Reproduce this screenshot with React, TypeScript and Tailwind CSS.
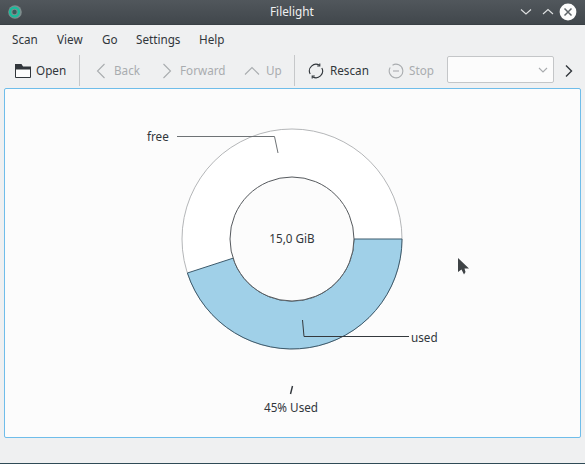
import React from "react";

const font = { fontFamily: '"Noto Sans", sans-serif' };

function Tool({ icon, label, off, w }: { icon: React.ReactNode; label: string; off?: boolean; w: string }) {
  return (
    <div className={`flex items-center h-[30px] shrink-0 ${w} ${off ? "text-[#a9acaf]" : "text-[#31363b]"}`}>
      {icon}
      <span className="text-[11.7px] leading-none">{label}</span>
    </div>
  );
}

const Sep = () => <div className="w-px h-[31px] bg-[#c6c8ca] shrink-0" />;

export default function App() {
  const cx = 287, cy = 150;
  return (
    <div className="w-[585px] h-[464px] bg-[#eff0f1] flex flex-col overflow-hidden" style={font}>
      {/* title bar */}
      <div className="h-[25px] shrink-0 flex items-center justify-between bg-gradient-to-b from-[#51575c] to-[#41474c] border-b border-[#3a4045] relative">
        <svg width="16" height="16" viewBox="0 0 16 16" className="ml-[7px]">
          <circle cx="8" cy="8" r="6.8" fill="#7f8c8d" />
          <circle cx="7.5" cy="8" r="4.4" fill="none" stroke="#1abc9c" strokeWidth="2.4" />
          <circle cx="7.5" cy="8" r="2.2" fill="#3d5a5c" />
        </svg>
        <span className="absolute left-[270px] top-[3px] text-[11.8px] leading-[17px] text-[#eff0f1]">Filelight</span>
        <div className="flex items-center mr-[8px]">
          <svg width="14" height="10" viewBox="0 0 14 10" className="mr-[8px]" fill="none" stroke="#dfe1e2" strokeWidth="1.1">
            <path d="M2 2.5 L7 7 L12 2.5" />
          </svg>
          <svg width="14" height="10" viewBox="0 0 14 10" className="mr-[4px]" fill="none" stroke="#dfe1e2" strokeWidth="1.1">
            <path d="M2 7 L7 2.5 L12 7" />
          </svg>
          <svg width="18" height="18" viewBox="0 0 18 18">
            <circle cx="9" cy="9" r="8.4" fill="#fcfcfc" />
            <path d="M5.5 5.5 L12.5 12.5 M12.5 5.5 L5.5 12.5" stroke="#5f6569" strokeWidth="1.5" />
          </svg>
        </div>
      </div>

      {/* menu */}
      <div className="h-[29px] shrink-0 flex items-center pl-[12px] text-[11.7px] text-[#31363b]">
        <span className="w-[45px]">Scan</span>
        <span className="w-[45px]">View</span>
        <span className="w-[34px]">Go</span>
        <span className="w-[63px]">Settings</span>
        <span>Help</span>
      </div>

      {/* toolbar */}
      <div className="h-[33px] shrink-0 flex items-center pl-[15px]">
        <Tool
          w="w-[64px]"
          label="Open"
          icon={
            <svg width="16" height="16" viewBox="0 0 16 16" className="mr-[5px]">
              <path d="M0.5 2.5 V14.5 H15.5 V4.5 H7.5 L6 2.5 Z" fill="#fcfcfc" stroke="#31363b" />
              <path d="M0 1 H6.5 L8 3.5 H16 V6.5 H0 Z" fill="#31363b" />
            </svg>
          }
        />
        <Sep />
        <div className="w-[15px] shrink-0" />
        <Tool
          off
          w="w-[66px]"
          label="Back"
          icon={
            <svg width="12" height="16" viewBox="0 0 12 16" className="mr-[7px]" fill="none" stroke="#a9acaf" strokeWidth="1.1">
              <path d="M9.5 1 L2.5 8 L9.5 15" />
            </svg>
          }
        />
        <Tool
          off
          w="w-[83px]"
          label="Forward"
          icon={
            <svg width="12" height="16" viewBox="0 0 12 16" className="mr-[7px]" fill="none" stroke="#a9acaf" strokeWidth="1.1">
              <path d="M2.5 1 L9.5 8 L2.5 15" />
            </svg>
          }
        />
        <Tool
          off
          w="w-[50px]"
          label="Up"
          icon={
            <svg width="16" height="12" viewBox="0 0 16 12" className="mr-[6px]" fill="none" stroke="#a9acaf" strokeWidth="1.1">
              <path d="M1 9.5 L8 2.5 L15 9.5" />
            </svg>
          }
        />
        <Sep />
        <div className="w-[13px] shrink-0" />
        <Tool
          w="w-[80px]"
          label="Rescan"
          icon={
            <svg width="16" height="16" viewBox="0 0 16 16" className="mr-[6px]" fill="none" stroke="#31363b" strokeWidth="1.1">
              <path d="M2.2 11 A6.6 6.6 0 0 1 11.5 2.3" />
              <path d="M13.8 5 A6.6 6.6 0 0 1 4.5 13.7" />
              <path d="M11.8 0.5 V3 H9.2" />
              <path d="M4.2 15.5 V13 H6.8" />
            </svg>
          }
        />
        <Tool
          off
          w="w-[59px]"
          label="Stop"
          icon={
            <svg width="16" height="16" viewBox="0 0 16 16" className="mr-[5px]" fill="none" stroke="#a9acaf" strokeWidth="1.1">
              <path d="M4.5 2.2 A6.8 6.8 0 1 1 2.2 4.5" />
              <path d="M5 8 H11" />
            </svg>
          }
        />
        <div className="w-[107px] h-[27px] shrink-0 mb-[2px] bg-[#fcfcfc] border border-[#c4c6c8] rounded-[2px] flex items-center justify-end pr-[5px]">
          <svg width="10" height="6" viewBox="0 0 10 6" fill="none" stroke="#a9acaf" strokeWidth="1.1">
            <path d="M1 1 L5 5 L9 1" />
          </svg>
        </div>
        <svg width="10" height="12" viewBox="0 0 10 12" className="ml-[10px]" fill="none" stroke="#31363b" strokeWidth="1.4">
          <path d="M2 0.5 L7.5 6 L2 11.5" />
        </svg>
      </div>

      {/* chart panel */}
      <div className="ml-[4px] mt-px w-[577px] h-[350px] shrink-0 bg-[#fcfcfc] border border-[#6fbdea] rounded-[2px] relative overflow-hidden">
        <svg width="575" height="348" viewBox="0 0 575 348" className="block">
          <circle cx={cx} cy={cy} r="110" fill="#ffffff" stroke="#b4b6b8" strokeWidth="1" />
          <path
            d={`M ${cx + 110} ${cy} A 110 110 0 0 1 ${cx - 104.6} ${cy + 34} L ${cx - 59} ${cy + 19.2} A 62 62 0 0 0 ${cx + 62} ${cy} Z`}
            fill="#a0d0e8"
            stroke="#3c5a6c"
            strokeWidth="1"
          />
          <circle cx={cx} cy={cy} r="62" fill="#fcfcfc" stroke="#55595d" strokeWidth="1" />
          <path d="M172 47.5 H269.5 L273 64" fill="none" stroke="#6e7275" strokeWidth="1" />
          <path d="M297.5 231 L299 247.5 H404" fill="none" stroke="#34393d" strokeWidth="1" />
          <path d="M287.5 297 L285.5 305" fill="none" stroke="#31363b" strokeWidth="1.4" />
          <g fontSize="11.7" fill="#31363b" style={font}>
            <text x="142" y="51.5">free</text>
            <text x={cx} y="154" textAnchor="middle">15,0 GiB</text>
            <text x="406" y="252.5">used</text>
            <text x={cx - 1} y="323" textAnchor="middle">45% Used</text>
          </g>
        </svg>
        <svg width="14" height="20" viewBox="0 0 14 20" className="absolute left-[452px] top-[168px]">
          <path d="M1 1 L1 15 L4.5 12.5 L7 17.5 L8.5 15 L7.5 11.5 L12 11.5 Z" fill="#3f4346" />
        </svg>
      </div>

      <div className="flex-1" />
      <div className="h-px shrink-0 bg-[#2f4a56]" />
    </div>
  );
}
